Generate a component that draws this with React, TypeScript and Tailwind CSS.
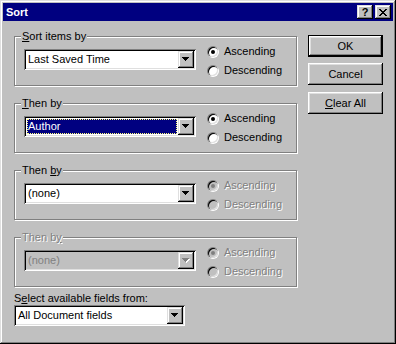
import React from "react";

const raisedBtn =
  "shadow-[inset_-1px_-1px_0_#000,inset_1px_1px_0_#fff,inset_-2px_-2px_0_#808080,inset_2px_2px_0_#dfdfdf]";
const arrowBtn =
  "shadow-[inset_-1px_-1px_0_#000,inset_1px_1px_0_#dfdfdf,inset_-2px_-2px_0_#808080,inset_2px_2px_0_#fff]";
const sunken =
  "shadow-[inset_1px_1px_0_#808080,inset_-1px_-1px_0_#fff,inset_2px_2px_0_#000,inset_-2px_-2px_0_#dfdfdf]";
const dim = "text-[#808080] [text-shadow:1px_1px_0_#fff]";

const CloseGlyph = () => (
  <svg width="8" height="7" viewBox="0 0 8 7" shapeRendering="crispEdges">
    <path
      d="M0 0h2v1H0zM6 0h2v1H6zM1 1h2v1H1zM5 1h2v1H5zM2 2h4v1H2zM3 3h2v1H3zM2 4h4v1H2zM1 5h2v1H1zM5 5h2v1H5zM0 6h2v1H0zM6 6h2v1H6z"
      fill="#000"
    />
  </svg>
);

const DownArrow = ({ disabled }: { disabled?: boolean }) => (
  <svg width="8" height="5" viewBox="0 0 8 5" shapeRendering="crispEdges">
    {disabled && <path d="M1 1h7v1H1zM2 2h5v1H2zM3 3h3v1H3zM4 4h1v1H4z" fill="#fff" />}
    <path
      d="M0 0h7v1H0zM1 1h5v1H1zM2 2h3v1H2zM3 3h1v1H3z"
      fill={disabled ? "#808080" : "#000"}
    />
  </svg>
);

interface IComboProps {
  value: string;
  width: string;
  focused?: boolean;
  disabled?: boolean;
}

const Combo = ({ value, width, focused, disabled }: IComboProps) => {
  return (
    <div
      className={`flex h-[21px] p-[2px] ${width} ${sunken} ${
        disabled ? "bg-[#c0c0c0]" : "bg-white"
      }`}
    >
      {focused ? (
        <div className="flex-1 m-[1px] flex items-center pl-[1px] bg-[#000080] text-white outline-1 outline-dotted outline-[#ffff80] -outline-offset-1 leading-none">
          {value}
        </div>
      ) : (
        <div
          className={`flex-1 flex items-center pl-[2px] leading-none ${
            disabled ? "text-[#808080]" : "text-black"
          }`}
        >
          {value}
        </div>
      )}
      <div
        className={`w-[16px] h-[17px] flex items-center justify-center bg-[#c0c0c0] ${arrowBtn}`}
      >
        <DownArrow disabled={disabled} />
      </div>
    </div>
  );
};

const Radio = ({ checked, disabled }: { checked?: boolean; disabled?: boolean }) => (
  <span className="flex w-[12px] h-[12px] p-[1px] rounded-full shadow-[inset_1px_1px_0_#808080,inset_-1px_-1px_0_#fff]">
    <span
      className={`flex-1 flex items-center justify-center rounded-full shadow-[inset_1px_1px_0_#000,inset_-1px_-1px_0_#dfdfdf] ${
        disabled ? "bg-[#c0c0c0]" : "bg-white"
      }`}
    >
      {checked && (
        <span
          className={`w-[4px] h-[4px] rounded-full ${disabled ? "bg-[#808080]" : "bg-black"}`}
        />
      )}
    </span>
  </span>
);

const RadioRow = ({
  label,
  checked,
  disabled,
}: {
  label: string;
  checked?: boolean;
  disabled?: boolean;
}) => (
  <div className="flex items-center gap-[5px] h-[13px] leading-[13px]">
    <Radio checked={checked} disabled={disabled} />
    <span className={disabled ? dim : ""}>{label}</span>
  </div>
);

interface IGroupProps {
  label: React.ReactNode;
  value: string;
  focused?: boolean;
  disabled?: boolean;
  comboDisabled?: boolean;
}

const SortGroup = ({ label, value, focused, disabled, comboDisabled }: IGroupProps) => {
  return (
    <fieldset className="m-0 p-0 border border-[#808080] shadow-[inset_1px_1px_0_#fff,1px_1px_0_#fff]">
      <legend
        className={`ml-[6px] px-[1px] h-[13px] leading-[13px] bg-[#c0c0c0] ${
          comboDisabled ? dim : ""
        }`}
      >
        {label}
      </legend>
      <div className="flex items-start pl-[9px] pt-[2px] pb-[8px]">
        <div className="mt-[4px]">
          <Combo
            value={value}
            width="w-[172px]"
            focused={focused}
            disabled={comboDisabled}
          />
        </div>
        <div className="ml-[11px] flex flex-col gap-[6px]">
          <RadioRow label="Ascending" checked disabled={disabled} />
          <RadioRow label="Descending" disabled={disabled} />
        </div>
      </div>
    </fieldset>
  );
};

const Button = ({ children, isDefault }: { children: React.ReactNode; isDefault?: boolean }) =>
  isDefault ? (
    <div className="w-[75px] h-[22px] border border-black">
      <div className={`w-full h-full flex items-center justify-center bg-[#c0c0c0] ${raisedBtn}`}>
        {children}
      </div>
    </div>
  ) : (
    <div
      className={`w-[75px] h-[22px] flex items-center justify-center bg-[#c0c0c0] ${raisedBtn}`}
    >
      {children}
    </div>
  );

export default function App() {
  return (
    <div className="w-[396px] h-[344px] bg-[#c0c0c0] p-[3px] shadow-[inset_-1px_-1px_0_#000,inset_1px_1px_0_#dfdfdf,inset_-2px_-2px_0_#808080,inset_2px_2px_0_#fff] font-['Liberation_Sans',Arial,sans-serif] text-[11px] text-black select-none">
      <div className="h-[18px] bg-[#000080] flex items-center pl-[3px] pr-[2px]">
        <span className="flex-1 text-white font-bold text-[11px]">Sort</span>
        <div className="flex gap-[2px]">
          <div
            className={`w-[16px] h-[14px] flex items-center justify-center bg-[#c0c0c0] font-bold text-[11px] leading-none ${arrowBtn}`}
          >
            ?
          </div>
          <div
            className={`w-[16px] h-[14px] flex items-center justify-center bg-[#c0c0c0] ${arrowBtn}`}
          >
            <CloseGlyph />
          </div>
        </div>
      </div>

      <div className="flex">
        <div className="pl-[11px] pt-[9px] w-[294px] flex flex-col gap-[11px]">
          <SortGroup
            label={
              <>
                <u>S</u>ort items by
              </>
            }
            value="Last Saved Time"
          />
          <SortGroup
            label={
              <>
                <u>T</u>hen by
              </>
            }
            value="Author"
            focused
          />
          <SortGroup
            label={
              <>
                Then <u>b</u>y
              </>
            }
            value="(none)"
            disabled
          />
          <SortGroup
            label={
              <>
                Then b<u>y</u>
              </>
            }
            value="(none)"
            disabled
            comboDisabled
          />
          <div className="flex flex-col -mt-[6px]">
            <div className="h-[13px] leading-[13px]">
              S<u>e</u>lect available fields from:
            </div>
            <Combo value="All Document fields" width="w-[171px]" />
          </div>
        </div>

        <div className="ml-[11px] pt-[14px] flex flex-col">
          <Button isDefault>OK</Button>
          <div className="mt-[6px]">
            <Button>Cancel</Button>
          </div>
          <div className="mt-[7px]">
            <Button>
              <span>
                <u>C</u>lear All
              </span>
            </Button>
          </div>
        </div>
      </div>
    </div>
  );
}
